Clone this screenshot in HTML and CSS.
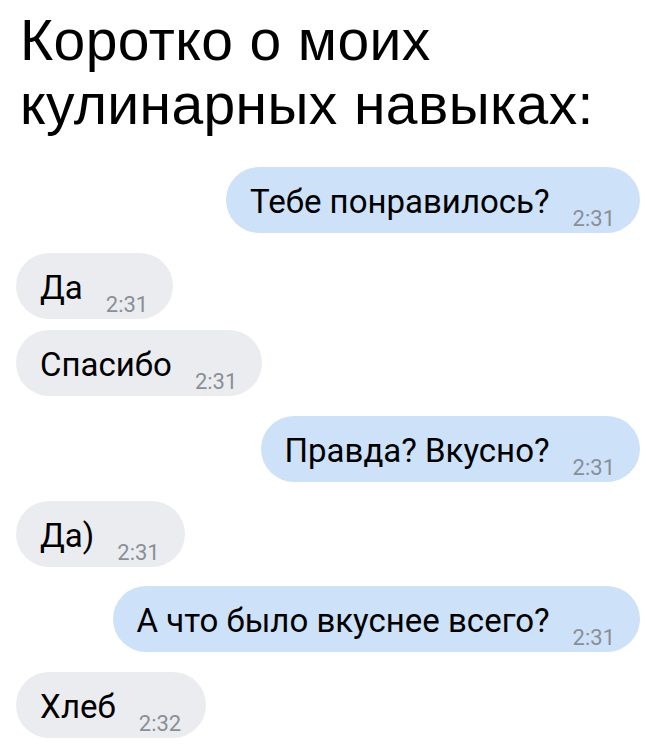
FILE: index.html
```html
<!DOCTYPE html>
<html lang="ru">
<head>
    <meta charset="UTF-8">
    <meta name="viewport" content="width=device-width, initial-scale=1.0">
    <title>Короче</title>
    <link rel="stylesheet" href="styles.css">
</head>
<body>

    <h1 class="title">Коротко о моих<br>кулинарных навыках:</h1>

    <div class="chat">
        <div class="msg out"><span class="text">Тебе понравилось?</span><span class="time">2:31</span></div>
        <div class="msg in"><span class="text">Да</span><span class="time">2:31</span></div>
        <div class="msg in same"><span class="text">Спасибо</span><span class="time">2:31</span></div>
        <div class="msg out"><span class="text">Правда? Вкусно?</span><span class="time">2:31</span></div>
        <div class="msg in"><span class="text">Да)</span><span class="time">2:31</span></div>
        <div class="msg out"><span class="text">А что было вкуснее всего?</span><span class="time">2:31</span></div>
        <div class="msg in"><span class="text">Хлеб</span><span class="time">2:32</span></div>
    </div>

</body>
</html>
```

FILE: styles.css
```css
body {
    margin: 0;
    background: #ffffff;
    color: #000000;
}

.title {
    font-family: "Liberation Sans", Arial, sans-serif;
    font-weight: normal;
    font-size: 57px;
    line-height: 64px;
    letter-spacing: 0.4px;
    margin: 0;
    padding: 8px 0 0 20px;
}

.chat {
    display: flex;
    flex-direction: column;
    padding: 0 10px 0 16px;
    margin-top: 12px; /* first bubble sits ~30px under the title */
    font-family: Roboto, "Noto Sans", sans-serif;
}

.msg {
    display: flex;
    align-items: flex-end;
    box-sizing: border-box;
    height: 66px;
    padding: 0 25px 0 24px;
    border-radius: 33px;
    margin-top: 19.4px;
}

.msg.same {
    margin-top: 11.5px;
}

.out {
    align-self: flex-end;
    background-color: #cde1f9;
}

.in {
    align-self: flex-start;
    background-color: #ebecf0;
}

.text {
    font-size: 33px;
    line-height: 62px;
    color: #000000;
}

.time {
    font-size: 22px;
    line-height: 22px;
    color: #8a8f97;
    margin: 0 0 3px 23px;
}
```
